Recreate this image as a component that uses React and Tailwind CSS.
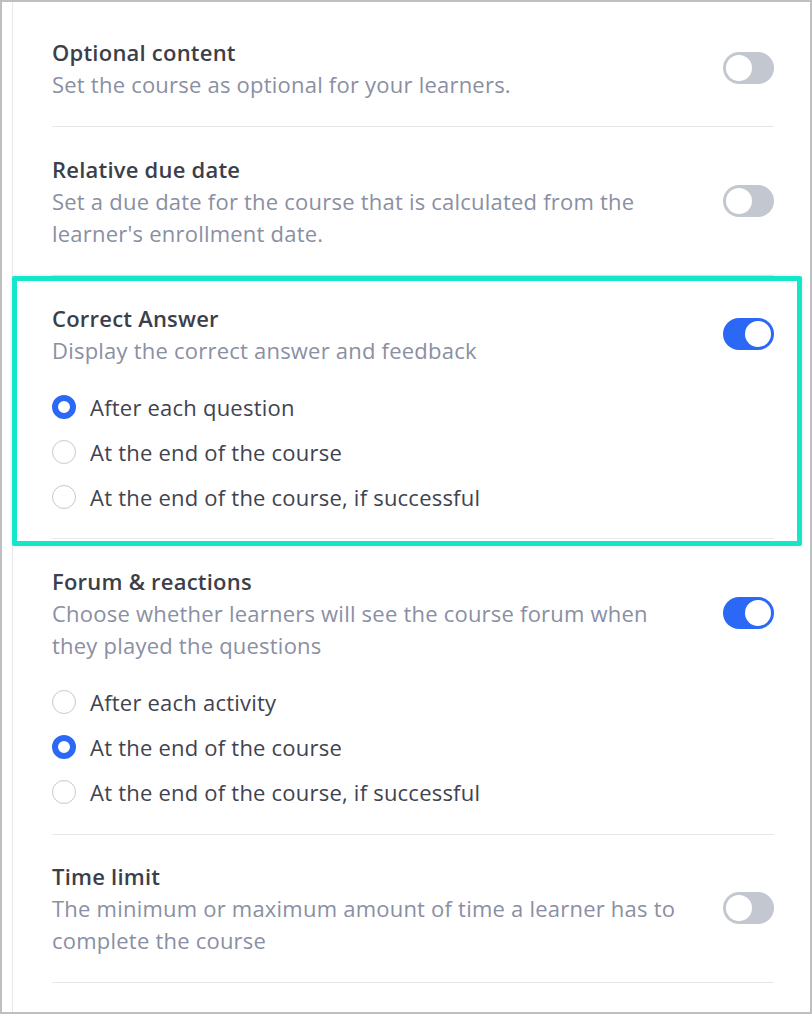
import React, { useState } from 'react';

const Toggle = ({ on, onChange }) => (
  <button
    type="button"
    onClick={onChange}
    className={`relative flex-shrink-0 w-[51px] h-[32px] rounded-full transition-colors ${on ? 'bg-[#2b68f5]' : 'bg-[#c3c7cf]'}`}
  >
    <span
      className={`absolute top-[3px] w-[26px] h-[26px] rounded-full bg-white transition-all ${on ? 'left-[22px]' : 'left-[3px]'}`}
    />
  </button>
);

const Radio = ({ checked, label, onClick }) => (
  <button type="button" onClick={onClick} className="flex items-center gap-[14px] h-[32px] text-left">
    <span
      className={`flex-shrink-0 w-[24px] h-[24px] rounded-full bg-white ${checked ? 'border-[6px] border-[#2b68f5]' : 'border-[1.5px] border-[#c6c9d1]'}`}
    />
    <span className="text-[22px] tracking-[0.01em] leading-[32px] text-[#3f4350]">{label}</span>
  </button>
);

const SettingRow = ({ title, description, on, onToggle, options, selected, onSelect, className }) => (
  <div className={`border-b border-[#e6e7ec] ${className}`}>
    <div className="flex items-center justify-between">
      <div className="w-[631px]">
        <h3 className="text-[22px] tracking-[0.01em] leading-[32px] font-semibold text-[#3b3f4a]">{title}</h3>
        <p className="text-[22px] tracking-[0.01em] leading-[32px] text-[#8a8fa3]">{description}</p>
      </div>
      <Toggle on={on} onChange={onToggle} />
    </div>
    {on && options && (
      <div className="flex flex-col gap-[13px] mt-[25px]">
        {options.map((opt, idx) => (
          <Radio key={opt} label={opt} checked={selected === idx} onClick={() => onSelect(idx)} />
        ))}
      </div>
    )}
  </div>
);

const App = () => {
  const [optional, setOptional] = useState(false);
  const [dueDate, setDueDate] = useState(false);
  const [correct, setCorrect] = useState(true);
  const [correctWhen, setCorrectWhen] = useState(0);
  const [forum, setForum] = useState(true);
  const [forumWhen, setForumWhen] = useState(1);
  const [timeLimit, setTimeLimit] = useState(false);

  return (
    <div
      className="w-[812px] h-[1014px] bg-white border-2 border-[#bfbfbf] pl-[10px] overflow-hidden"
      style={{ fontFamily: '"Open Sans", "Noto Sans", sans-serif' }}
    >
      <div className="h-full border-l border-[#e8e8ee] pl-[39px] pr-[36px] pt-[7px]">
        <SettingRow
          className="pt-[27px] pb-[26px]"
          title="Optional content"
          description="Set the course as optional for your learners."
          on={optional}
          onToggle={() => setOptional(!optional)}
        />
        <SettingRow
          className="pt-[26px] pb-[26px]"
          title="Relative due date"
          description="Set a due date for the course that is calculated from the learner's enrollment date."
          on={dueDate}
          onToggle={() => setDueDate(!dueDate)}
        />

        {/* Highlighted section */}
        <div className="relative">
          <SettingRow
            className="pt-[26px] pb-[25px]"
            title="Correct Answer"
            description="Display the correct answer and feedback"
            on={correct}
            onToggle={() => setCorrect(!correct)}
            options={['After each question', 'At the end of the course', 'At the end of the course, if successful']}
            selected={correctWhen}
            onSelect={setCorrectWhen}
          />
          <div className="pointer-events-none absolute top-0 left-[-40px] right-[-28px] bottom-[-7px] border-[5px] border-[#12e6cb] rounded-[2px] shadow-[0_0_4px_rgba(0,0,0,0.12)]" />
        </div>

        <SettingRow
          className="pt-[26px] pb-[26px]"
          title="Forum & reactions"
          description="Choose whether learners will see the course forum when they played the questions"
          on={forum}
          onToggle={() => setForum(!forum)}
          options={['After each activity', 'At the end of the course', 'At the end of the course, if successful']}
          selected={forumWhen}
          onSelect={setForumWhen}
        />
        <SettingRow
          className="pt-[25px] pb-[26px]"
          title="Time limit"
          description="The minimum or maximum amount of time a learner has to complete the course"
          on={timeLimit}
          onToggle={() => setTimeLimit(!timeLimit)}
        />
      </div>
    </div>
  );
};

export default App;
